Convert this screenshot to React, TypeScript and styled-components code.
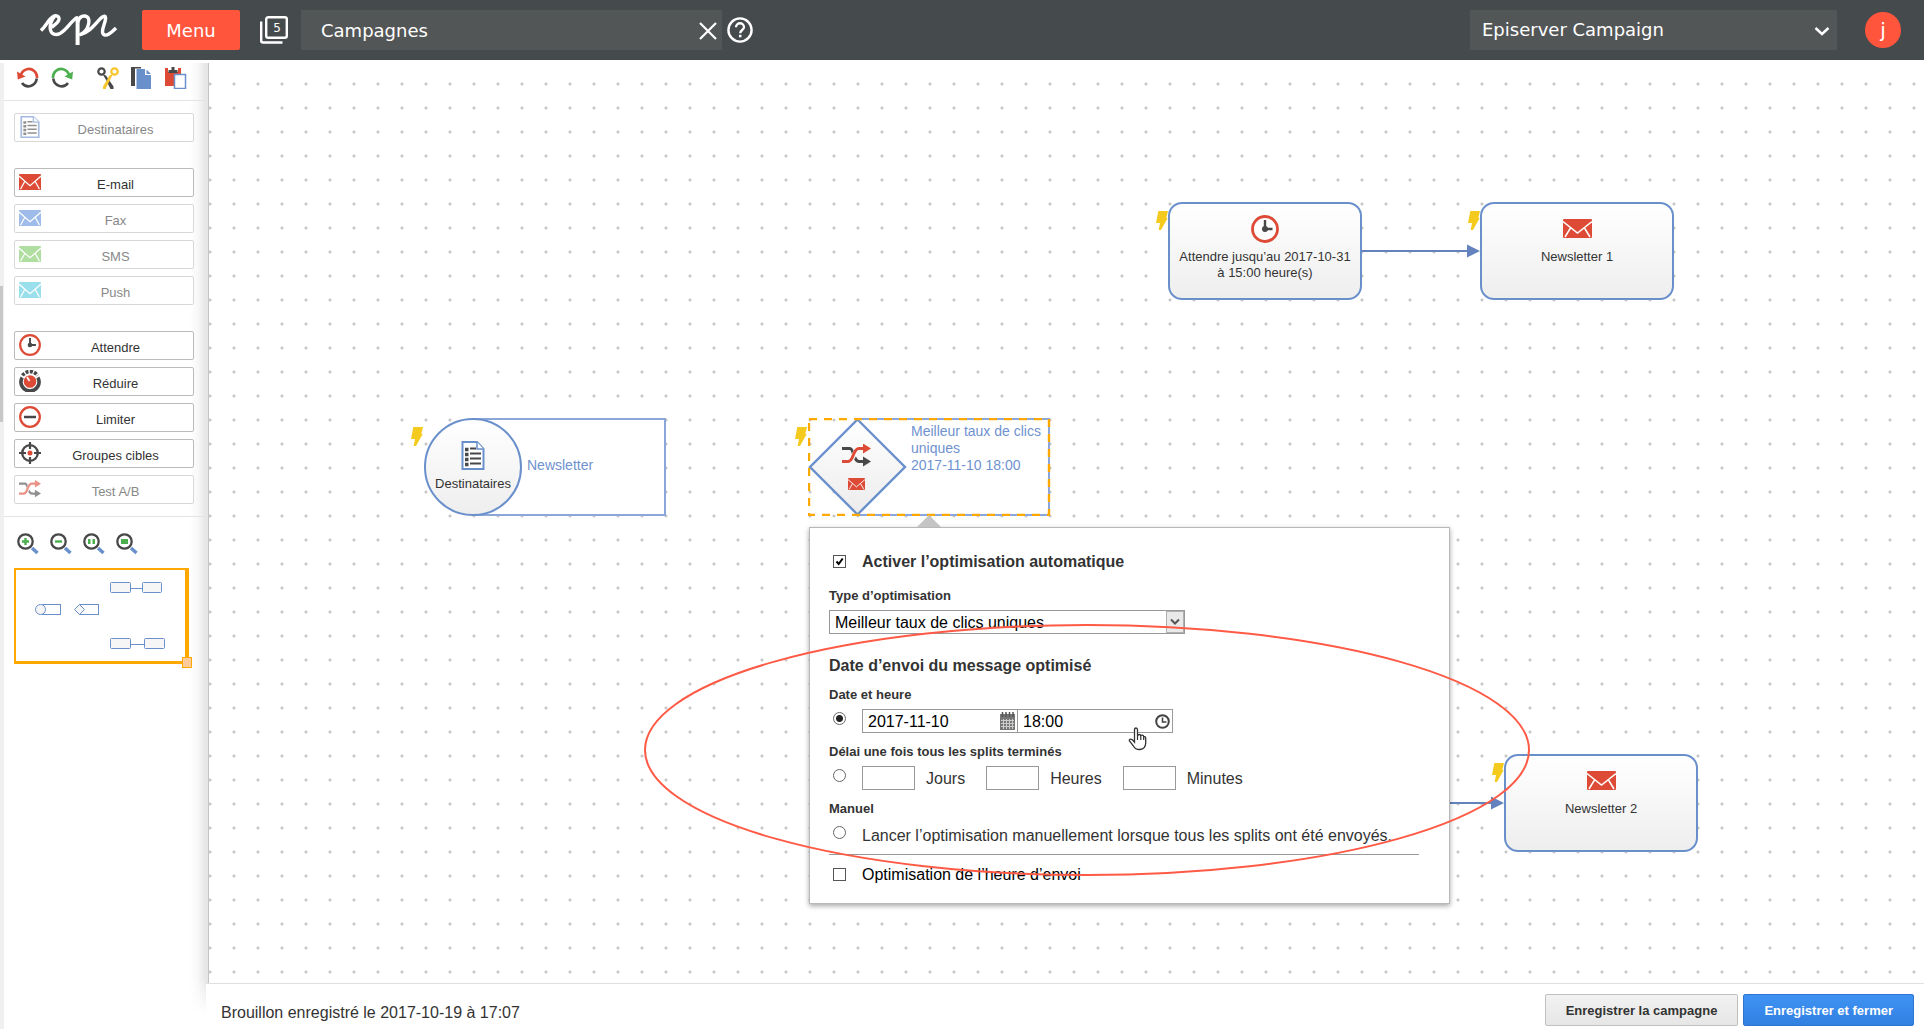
import React from "react";
import styled, { createGlobalStyle, css } from "styled-components";

const RED = "#dd4b36";
const DARK = "#484848";
const BLUE = "#6a90cc";
const GREEN = "#4cb04f";
const ORANGE = "#ffa800";
const CORAL = "#ff553d";

const GlobalStyle = createGlobalStyle`
  *, *::before, *::after { box-sizing: border-box; }
  body {
    margin: 0;
    background: #fff;
    color: #333;
    font-family: "Liberation Sans", Arial, sans-serif;
    font-size: 13px;
    line-height: 16px;
  }
  button, input, select { font: inherit; color: inherit; margin: 0; }
  button { cursor: pointer; }
  svg { display: block; }
`;

/* ---------- page frame ---------- */

const Page = styled.div`
  display: flex;
  flex-direction: column;
  min-height: 100vh;
`;

const Header = styled.header`
  display: flex;
  align-items: center;
  height: 60px;
  padding: 0 23px 0 40px;
  background: #454a4c;
  color: #fff;
  font-family: "DejaVu Sans", Verdana, sans-serif;
  font-size: 18px;
  line-height: 40px;
`;

const MenuButton = styled.button`
  width: 98px;
  height: 40px;
  margin-left: 25px;
  padding: 1px 0 0;
  border: 0;
  border-radius: 2px;
  background: ${CORAL};
`;

const IconButton = styled.button`
  display: flex;
  padding: 0;
  border: 0;
  background: none;
`;

const TabsButton = styled(IconButton)`
  margin: 0 13px 0 20px;
`;

const Tab = styled.div`
  display: flex;
  align-items: center;
  justify-content: space-between;
  flex: 0 1 421px;
  height: 40px;
  padding: 1px 4px 0 20px;
  margin-right: 5px;
  background: #535657;
`;

const ProductPicker = styled.div`
  display: grid;
  align-items: center;
  flex: 0 1 367px;
  height: 40px;
  margin-left: auto;
  background: #535657;

  select, svg { grid-area: 1 / 1; }
  svg { justify-self: end; margin-right: 7px; pointer-events: none; }
`;

const ProductSelect = styled.select`
  appearance: none;
  width: 100%;
  height: 40px;
  padding: 0 30px 0 12px;
  border: 0;
  background: transparent;
`;

const Avatar = styled.button`
  width: 36px;
  height: 36px;
  margin-left: 28px;
  padding: 0;
  border: 0;
  border-radius: 50%;
  background: ${CORAL};
  font-size: 20px;
  line-height: 36px;
`;

const Body = styled.div`
  display: flex;
  flex: 1;
  padding-top: 3px;
`;

const ScrollTrack = styled.div`
  flex: 0 0 4px;
  padding-top: 223px;
  background: #f0f0f0;
`;

const ScrollThumb = styled.div`
  width: 3px;
  height: 136px;
  background: #c8c8c8;
`;

const Sidebar = styled.aside`
  flex: 0 0 202px;
  background:
    linear-gradient(to bottom, rgba(255, 255, 255, 0), #fff 36px) left bottom / 100% 52px no-repeat,
    linear-gradient(to right, rgba(0, 0, 0, 0), rgba(0, 0, 0, 0.03) 8px, rgba(0, 0, 0, 0.1)) right top / 16px 100% no-repeat;
`;

const Main = styled.main`
  display: flex;
  flex-direction: column;
  flex: 1;
  min-width: 0;
`;

/* ---------- sidebar ---------- */

const Toolbar = styled.div<{ $gap: number; $top: number }>`
  display: flex;
  gap: ${(p) => p.$gap}px;
  padding: ${(p) => p.$top}px 0 0 13px;
`;

const EditToolbar = styled(Toolbar)`
  height: 38px;
  border-bottom: 1px solid #e4e4e4;
`;

const ToolGroup = styled.div`
  display: flex;
  gap: 12px;
  margin-left: 12px;
`;

const Palette = styled.div`
  display: flex;
  flex-direction: column;
  gap: 26px;
  padding: 12px 12px 12px 10px;
  border-bottom: 1px solid #e4e4e4;
`;

const PaletteGroup = styled.div`
  display: flex;
  flex-direction: column;
  gap: 7px;
`;

const PaletteButton = styled.button`
  display: flex;
  height: 29px;
  padding: 0 14px 0 4px;
  border: 1px solid #bbb;
  border-radius: 2px;
  background: #fff;
  line-height: 30px;

  &:disabled {
    border-color: #d8d8d8;
    color: #888;
    cursor: default;
  }
  &:disabled svg { opacity: 0.6; }
`;

const PaletteIcon = styled.span`
  display: flex;
  align-items: center;
  justify-content: center;
  flex: 0 0 22px;
  height: 26px;
`;

const PaletteText = styled.span`
  flex: 1;
  padding: 1px 0 0 11px;
  text-align: center;
`;

const MiniMap = styled.div`
  position: relative;
  width: 175px;
  height: 96px;
  margin: 13px 0 0 10px;
  border: solid ${ORANGE};
  border-width: 2px 4px 3px 2px;
`;

const MiniHandle = styled.div`
  position: absolute;
  right: -7px;
  bottom: -7px;
  width: 10px;
  height: 11px;
  border: 1px solid ${ORANGE};
  background: #ffcc99;
`;

/* ---------- canvas ---------- */

const Canvas = styled.section`
  position: relative;
  flex: 1;
  margin-left: 2px;
  border-left: 1px solid #c4c4c4;
  background: radial-gradient(circle at 12px 12px, #c8c8c8 1px, rgba(200, 200, 200, 0) 2px) 13px 9px / 24px 24px;
  box-shadow: -2px 0 0 #e6e6e6;
  overflow: hidden;
`;

const CanvasLayer = styled.svg`
  position: absolute;
  left: 0;
  top: 0;
  pointer-events: none;
`;

const placed = css<{ $x: number; $y: number }>`
  position: absolute;
  left: ${(p) => p.$x}px;
  top: ${(p) => p.$y}px;
`;

const Node = styled.div<{ $x: number; $y: number; $w?: number; $round?: boolean }>`
  ${placed}
  display: flex;
  flex-direction: column;
  align-items: center;
  gap: 6px;
  width: ${(p) => p.$w ?? 194}px;
  height: 98px;
  padding: ${(p) => (p.$round ? "21px 0 0" : "10px 7px 0")};
  border: 2px solid ${BLUE};
  border-radius: ${(p) => (p.$round ? "50%" : "14px")};
  background: linear-gradient(#fff, #eee);
  text-align: center;
`;

const IconSlot = styled.div`
  display: flex;
  align-items: center;
  height: 29px;
`;

const BoltMark = styled.div<{ $x: number; $y: number }>`
  ${placed}
`;

const Caption = styled.div<{ $x: number; $y: number; $w: number; $pad: string }>`
  ${placed}
  width: ${(p) => p.$w}px;
  height: 98px;
  padding: ${(p) => p.$pad};
  border: 2px solid #8ba7d9;
  border-left: 0;
  background: #fff;
  color: #6f92cf;
  font-size: 14px;
  line-height: 17px;
`;

const SplitShape = styled.div<{ $x: number; $y: number }>`
  ${placed}
`;

/* ---------- popover ---------- */

const Popover = styled.form<{ $x: number; $y: number }>`
  ${placed}
  width: 641px;
  padding: 24px 30px 18px 19px;
  border: 1px solid #b8b8b8;
  background: #fff;
  box-shadow: 0 2px 5px rgba(0, 0, 0, 0.35);
  font-size: 16px;
  line-height: 20px;

  &::before {
    content: "";
    position: absolute;
    left: 107px;
    top: -13px;
    border: solid transparent;
    border-width: 0 12px 12px;
    border-bottom-color: #c4c4c4;
  }
`;

const ChoiceRow = styled.div`
  display: flex;
  align-items: flex-start;
  gap: 16px;
  padding-left: 4px;
`;

const FieldLabel = styled.label`
  display: block;
  margin: 11px 0 6px;
  font-size: 13px;
  font-weight: bold;
  line-height: 16px;
`;

const TypeLabel = styled(FieldLabel)`
  margin-top: 16px;
`;

const StrongLabel = styled.label`
  font-weight: bold;
`;

const SectionTitle = styled.h2`
  margin: 22px 0 0;
  font-size: 16px;
  line-height: 20px;
`;

const Check = styled.input`
  appearance: none;
  flex: none;
  width: 13px;
  height: 13px;
  margin-top: 3px;
  border: 1px solid #555;
  background: #fff;

  &:checked {
    background: #fff
      url("data:image/svg+xml,%3Csvg xmlns='http://www.w3.org/2000/svg' width='11' height='11'%3E%3Cpath d='M2.500 5.500l2.200 2.500 4-5.500' fill='none' stroke='%23000' stroke-width='2'/%3E%3C/svg%3E")
      center no-repeat;
  }
`;

const Radio = styled.input`
  appearance: none;
  flex: none;
  width: 13px;
  height: 13px;
  margin-top: 3px;
  border: 1px solid #666;
  border-radius: 50%;
  background: #fff;

  &:checked { background: radial-gradient(circle, #222 3px, #fff 4px); }
`;

const SelectBox = styled.div`
  display: grid;
  grid-template-columns: 1fr 18px;
  width: 356px;
  border: 1px solid #999;
`;

const TypeSelect = styled.select`
  appearance: none;
  grid-area: 1 / 1 / 2 / 3;
  height: 22px;
  padding: 1px 22px 0 5px;
  border: 0;
  background: transparent;
  color: #000;
  line-height: 22px;
`;

const SelectArrow = styled.span`
  grid-area: 1 / 2;
  display: flex;
  align-items: center;
  justify-content: center;
  border: 1px solid #b0b0b0;
  background: #e9e9e9;
  pointer-events: none;
`;

const FieldPair = styled.div`
  display: flex;
`;

const IconField = styled.div`
  display: flex;
  align-items: center;
  width: 156px;
  height: 24px;
  padding: 0 2px 0 5px;
  border: 1px solid #999;

  & + & { margin-left: -1px; }
  input {
    flex: 1;
    min-width: 0;
    padding: 1px 0 0;
    border: 0;
    outline: 0;
    background: none;
    color: #000;
  }
`;

const Delay = styled.label`
  display: flex;
  gap: 11px;
  height: 24px;
  margin-right: 5px;
  line-height: 26px;

  input {
    width: 53px;
    height: 24px;
    border: 1px solid #999;
    background: #fff;
  }
`;

const ManualLabel = styled.label`
  height: 24px;
  line-height: 26px;
`;

const Rule = styled.hr`
  margin: 7px 0 10px;
  border: 0;
  border-top: 1px solid #999;
`;

const PlainLabel = styled.label`
  color: #000;
`;

/* ---------- footer ---------- */

const Footer = styled.footer`
  display: flex;
  gap: 5px;
  height: 46px;
  padding: 10px 10px 3px 15px;
  border-top: 1px solid #e0e0e0;
  background: #fff;
`;

const DraftNote = styled.span`
  margin-right: auto;
  padding-top: 1px;
  font-size: 16px;
  line-height: 36px;
`;

const FooterButton = styled.button<{ $primary?: boolean }>`
  height: 32px;
  padding: 1px 20px 0;
  border: 1px solid ${(p) => (p.$primary ? "#2f74cf" : "#c0c0c0")};
  border-radius: 2px;
  background: ${(p) => (p.$primary ? "linear-gradient(#3f92f3, #3080e2)" : "linear-gradient(#f2f2f2, #e6e6e6)")};
  color: ${(p) => (p.$primary ? "#fff" : "#333")};
  font-weight: bold;
`;

/* ---------- icons ---------- */

const Logo = () => (
  <svg width="77" height="32" viewBox="0 0 77 32" fill="none" stroke="#fff" strokeWidth="3.4" strokeLinejoin="round" role="img" aria-label="epi">
    <path d="M1 16.500C6 12 8 6 13 2.800C16 .8 19.500 2 19 5.200C18.500 9 14 11 11.500 13.500M14.500 2.500C11 6 9.500 12 10.500 16C11.500 20.500 16 21.500 20 19.500C25.500 17 30 9 35.500 4.500C37.400 3 37.600 4 37.600 7" />
    <path d="M37.600 5V31" strokeWidth="4" />
    <path d="M37.800 8C39 3.500 42 1.700 45 2C48.500 2.500 49.500 6 48.500 10C47.500 15 44.500 18.500 40.500 20.500C49 19 55 10 60.500 4.500C64 1 66 1.800 65.500 5C65 9.500 62.500 13.500 62.500 17.500C62.500 21 65.500 22 68.500 20.300C71.500 18.600 73.500 16.500 76 14" />
  </svg>
);

const TabsIcon = () => (
  <svg width="28" height="28" viewBox="0 0 28 28" fill="none" stroke="#fff" strokeWidth="2.400">
    <rect x="6.200" y="1.200" width="20.600" height="20.600" rx="2" />
    <path d="M1.200 5.500V24.500Q1.200 26.500 3.200 26.500H22.500" />
    <text x="17" y="15.500" fill="#fff" stroke="none" fontSize="12" textAnchor="middle" fontFamily="DejaVu Sans, sans-serif">5</text>
  </svg>
);

const CloseIcon = () => (
  <svg width="20" height="20" viewBox="0 0 20 20" stroke="#fff" strokeWidth="2.200">
    <path d="M2 2L18 18M18 2L2 18" />
  </svg>
);

const HelpIcon = () => (
  <svg width="26" height="26" viewBox="0 0 26 26" fill="none" stroke="#fff">
    <circle cx="13" cy="13" r="11.600" strokeWidth="2.400" />
    <path d="M9 10.300C9 4.800 17 5 17 10.200C17 13 13.200 13 13.200 16.200" strokeWidth="2.300" />
    <path d="M13.200 17.800V20.300" strokeWidth="2.500" />
  </svg>
);

const ChevronIcon = () => (
  <svg width="16" height="12" viewBox="0 0 16 12" fill="none" stroke="#fff" strokeWidth="2.400">
    <path d="M1.500 4L8 10L14.500 4" />
  </svg>
);

const UndoIcon = ({ redo }: { redo?: boolean }) => (
  <svg width="22" height="22" viewBox="0 0 22 22" fill="none" strokeWidth="2.600">
    <g transform={redo ? "translate(22 0) scale(-1 1)" : undefined}>
      <path d="M3.800 8C6 1.500 13 .3 17.200 4C19.500 6 20.200 8.500 20 11" stroke={redo ? GREEN : RED} />
      <path d="M19.800 11.500C18.500 19.500 9.500 22 5 16" stroke={DARK} />
      <path d="M0 4.500L8.500 9.500L.8 12.500Z" fill={redo ? GREEN : RED} />
    </g>
  </svg>
);

const CutIcon = () => (
  <svg width="22" height="22" viewBox="0 0 22 22" fill="none" strokeWidth="2.200">
    <path d="M5.500 7L9 8.500L16.500 19.500V22H13.500L8.500 12Z" fill={DARK} />
    <path d="M16 7L12.500 8.500L6 19.500V22H8.500L13.500 12Z" fill="#f7c52c" />
    <circle cx="4.500" cy="4.500" r="3.200" stroke={DARK} />
    <circle cx="17.500" cy="4.500" r="3.200" stroke="#f7c52c" />
  </svg>
);

const CopyIcon = () => (
  <svg width="22" height="22" viewBox="0 0 22 22">
    <path d="M0 0H10V1.500H4V19H0Z" fill={DARK} />
    <path d="M5.500 2H14V8H20V22H5.500Z" fill={BLUE} />
    <path d="M15.500 2.500L20 7H15.500Z" fill={BLUE} />
  </svg>
);

const PasteIcon = () => (
  <svg width="22" height="22" viewBox="0 0 22 22">
    <path d="M0 1H16V19H0Z" fill={RED} />
    <path d="M3 1H13V5H3Z" fill="#fff" />
    <path d="M6.500 0H9.500V3H12.500V6H3.500V3H6.500Z" fill={DARK} />
    <rect x="9.500" y="7.500" width="11" height="14" fill="#fff" stroke={BLUE} strokeWidth="1.500" />
  </svg>
);

const ListIcon = ({ w = 20, h = 22 }: { w?: number; h?: number }) => (
  <svg width={w} height={h} viewBox="0 0 24 29" preserveAspectRatio="none">
    <path d="M1.500 1H16L22.500 8V28H1.500Z" fill="#fff" stroke={BLUE} strokeWidth="2" />
    <path d="M16 1V8H22.500" fill="#fff" stroke={BLUE} strokeWidth="1.500" />
    <path d="M4 8.500H7.500M4 13.500H7.500M4 18.500H7.500M4 23.500H7.500" stroke={DARK} strokeWidth="3.400" />
    <path d="M9 7.500H15M9 12.500H20M9 17.500H20M9 22.500H20" stroke={DARK} strokeWidth="2" />
  </svg>
);

const MailIcon = ({ color = RED, w = 22, h = 16 }: { color?: string; w?: number; h?: number }) => (
  <svg width={w} height={h} viewBox="0 0 29 19" preserveAspectRatio="none">
    <rect width="29" height="19" rx="1" fill={color} />
    <path d="M0 2.500L14.500 14L29 2.500M2 18L7.500 9M27 18L21.500 9" fill="none" stroke="#fff" strokeWidth="1.500" />
  </svg>
);

const ClockIcon = ({ size = 22 }: { size?: number }) => (
  <svg width={size} height={size} viewBox="0 0 28 28" fill="none">
    <circle cx="14" cy="14" r="12.500" fill="#fff" stroke={RED} strokeWidth="2.800" />
    <path d="M14 5V14H21.500" stroke={DARK} strokeWidth="2.400" />
    <circle cx="14" cy="14" r="3" fill={DARK} />
  </svg>
);

const DialIcon = () => (
  <svg width="22" height="22" viewBox="0 0 22 22" fill="none">
    <path d="M3.200 7.500A9 9 0 1 0 18.800 7.500" stroke={DARK} strokeWidth="3.600" />
    <path d="M3.500 5.500A9 9 0 0 1 18.500 5.500" stroke={DARK} strokeWidth="3.600" strokeDasharray="3 1.300" />
    <circle cx="11" cy="11.500" r="6.300" fill={RED} />
    <path d="M8 7L10.500 11" stroke="#fff" strokeWidth="1.800" />
  </svg>
);

const LimitIcon = () => (
  <svg width="22" height="22" viewBox="0 0 22 22" fill="none">
    <circle cx="11" cy="11" r="9.800" stroke={RED} strokeWidth="2.300" />
    <path d="M5 11H17" stroke={DARK} strokeWidth="2.500" />
  </svg>
);

const TargetIcon = () => (
  <svg width="22" height="22" viewBox="0 0 22 22" fill="none" stroke={DARK}>
    <circle cx="11" cy="11" r="7.800" strokeWidth="2.300" />
    <path d="M11 0V7M11 15V22M0 11H7M15 11H22" strokeWidth="2.200" />
    <circle cx="11" cy="11" r="2.500" fill={RED} stroke="none" />
  </svg>
);

const ShuffleIcon = ({ w = 22, h = 18 }: { w?: number; h?: number }) => (
  <svg width={w} height={h} viewBox="0 0 29 23" fill="none" strokeWidth="3">
    <path d="M0 4.500H8C12 4.500 11 17.500 17 17.500H22" stroke={DARK} />
    <path d="M21 12.500L29 17.500L21 22.500Z" fill={DARK} />
    <path d="M8 17.500L15.500 5" stroke="#fff" strokeWidth="5" />
    <path d="M0 17.500H6C12 17.500 10.500 4.500 17 4.500H22" stroke={RED} />
    <path d="M21 -.5L29 4.500L21 9.500Z" fill={RED} />
  </svg>
);

const ZoomIcon = ({ mark }: { mark: string }) => (
  <svg width="22" height="22" viewBox="0 0 22 22" fill="none">
    <path d="M15 15L20.500 20" stroke={BLUE} strokeWidth="3.500" />
    <circle cx="8.500" cy="8.500" r="7.200" fill="#fff" stroke={DARK} strokeWidth="2.300" />
    <path d={mark} fill={GREEN} />
  </svg>
);

const BoltIcon = () => (
  <svg width="13" height="19" viewBox="0 0 13 19">
    <path d="M2.300 0H12L10.300 7H11.700L5 19H2.700L4 12H0Z" fill="#f5ca1e" />
  </svg>
);

const CalendarIcon = () => (
  <svg width="15" height="18" viewBox="0 0 15 18">
    <rect y="2" width="15" height="16" fill="#777" />
    <path d="M2.500 0V5M6 0V5M9.500 0V5M13 0V5" stroke="#555" strokeWidth="1.500" />
    <path d="M1 8.500H14M1 11.500H14M1 14.500H14M3.500 7V17M6.500 7V17M9.500 7V17M12.500 7V17" stroke="#ccc" />
  </svg>
);

const TimeIcon = () => (
  <svg width="15" height="15" viewBox="0 0 15 15" fill="none" stroke="#444">
    <circle cx="7.500" cy="7.500" r="6.300" strokeWidth="2" />
    <path d="M7.500 3.500V8H11.500" strokeWidth="1.600" />
  </svg>
);

/* ---------- data ---------- */

const palette = [
  [{ label: "Destinataires", icon: <ListIcon />, off: true }],
  [
    { label: "E-mail", icon: <MailIcon />, off: false },
    { label: "Fax", icon: <MailIcon color="#5f8fdc" />, off: true },
    { label: "SMS", icon: <MailIcon color="#7cc862" />, off: true },
    { label: "Push", icon: <MailIcon color="#56cbe0" />, off: true },
  ],
  [
    { label: "Attendre", icon: <ClockIcon />, off: false },
    { label: "Réduire", icon: <DialIcon />, off: false },
    { label: "Limiter", icon: <LimitIcon />, off: false },
    { label: "Groupes cibles", icon: <TargetIcon />, off: false },
    { label: "Test A/B", icon: <ShuffleIcon />, off: true },
  ],
];

const bolts = [
  [202, 364],
  [586, 364],
  [947, 148],
  [1259, 148],
  [1283, 700],
];

const zooms = [
  { name: "Agrandir", mark: "M7.300 5H9.700V7.300H12V9.700H9.700V12H7.300V9.700H5V7.300H7.300Z" },
  { name: "Réduire l’affichage", mark: "M5 7.300H12V9.700H5Z" },
  { name: "Taille réelle", mark: "M5 6H7.500V11H5ZM9.500 6H12V11H9.500Z" },
  { name: "Ajuster", mark: "M5 6H12V11H5Z" },
];

export default function App() {
  return (
    <Page>
      <GlobalStyle />
      <Header>
        <Logo />
        <MenuButton type="button">Menu</MenuButton>
        <TabsButton type="button" aria-label="Onglets"><TabsIcon /></TabsButton>
        <Tab>
          <span>Campagnes</span>
          <IconButton type="button" aria-label="Fermer"><CloseIcon /></IconButton>
        </Tab>
        <IconButton type="button" aria-label="Aide"><HelpIcon /></IconButton>
        <ProductPicker>
          <ProductSelect aria-label="Produit">
            <option>Episerver Campaign</option>
          </ProductSelect>
          <ChevronIcon />
        </ProductPicker>
        <Avatar type="button">j</Avatar>
      </Header>

      <Body>
        <ScrollTrack><ScrollThumb /></ScrollTrack>
        <Sidebar>
          <EditToolbar $gap={12} $top={4}>
            <IconButton type="button" aria-label="Annuler"><UndoIcon /></IconButton>
            <IconButton type="button" aria-label="Rétablir"><UndoIcon redo /></IconButton>
            <ToolGroup>
              <IconButton type="button" aria-label="Couper"><CutIcon /></IconButton>
              <IconButton type="button" aria-label="Copier"><CopyIcon /></IconButton>
              <IconButton type="button" aria-label="Coller"><PasteIcon /></IconButton>
            </ToolGroup>
          </EditToolbar>
          <Palette>
            {palette.map((group) => (
              <PaletteGroup key={group[0].label}>
                {group.map((item) => (
                  <PaletteButton type="button" key={item.label} disabled={item.off}>
                    <PaletteIcon>{item.icon}</PaletteIcon>
                    <PaletteText>{item.label}</PaletteText>
                  </PaletteButton>
                ))}
              </PaletteGroup>
            ))}
          </Palette>
          <Toolbar $gap={11} $top={16}>
            {zooms.map((z) => (
              <IconButton type="button" key={z.name} aria-label={z.name}><ZoomIcon mark={z.mark} /></IconButton>
            ))}
          </Toolbar>
          <MiniMap>
            <svg width="169" height="91" viewBox="0 0 169 91" fill="#f6f6f6" stroke={BLUE}>
              <path d="M114 18.500H128M114 74.500H130" />
              <rect x="94.500" y="12.500" width="20" height="10" rx="1" />
              <rect x="126.500" y="12.500" width="19" height="10" rx="1" />
              <rect x="26.500" y="34.500" width="18" height="10" fill="#fff" />
              <circle cx="24.500" cy="39.500" r="5" />
              <rect x="63.500" y="34.500" width="19" height="10" fill="#fff" />
              <path d="M63.500 34.500L68.500 39.500L63.500 44.500L58.500 39.500Z" />
              <rect x="94.500" y="68.500" width="20" height="10" rx="1" />
              <rect x="128.500" y="68.500" width="20" height="10" rx="1" />
            </svg>
            <MiniHandle />
          </MiniMap>
        </Sidebar>

        <Main>
          <Canvas>
            <CanvasLayer width="1600" height="900">
              <g stroke="#6482bd" strokeWidth="2">
                <path d="M1153 188H1262M1153 740H1286" />
              </g>
              <path d="M1258 181.500L1271 188L1258 194.500ZM1282 733.500L1295 740L1282 746.500Z" fill="#6482bd" />
            </CanvasLayer>

            {bolts.map(([x, y]) => (
              <BoltMark key={`${x}-${y}`} $x={x} $y={y}><BoltIcon /></BoltMark>
            ))}

            <Node $x={959} $y={139}>
              <IconSlot><ClockIcon size={28} /></IconSlot>
              <span>Attendre jusqu’au 2017-10-31 à 15:00 heure(s)</span>
            </Node>
            <Node $x={1271} $y={139}>
              <IconSlot><MailIcon w={29} h={19} /></IconSlot>
              <span>Newsletter 1</span>
            </Node>
            <Node $x={1295} $y={691}>
              <IconSlot><MailIcon w={29} h={19} /></IconSlot>
              <span>Newsletter 2</span>
            </Node>

            <Caption $x={264} $y={355} $w={193} $pad="37px 0 0 54px">Newsletter</Caption>
            <Node $x={215} $y={355} $w={98} $round>
              <IconSlot><ListIcon w={24} h={29} /></IconSlot>
              <span>Destinataires</span>
            </Node>

            <Caption $x={648} $y={355} $w={193} $pad="3px 0 0 54px">
              Meilleur taux de clics uniques
              <br />
              2017-11-10 18:00
            </Caption>
            <SplitShape $x={599} $y={355}>
              <svg width="243" height="98" viewBox="0 0 243 98">
                <defs>
                  <linearGradient id="split" x1="0" y1="0" x2="0" y2="1">
                    <stop offset="0" stopColor="#fff" />
                    <stop offset="1" stopColor="#ececec" />
                  </linearGradient>
                </defs>
                <path d="M49.500 1.500L97 49L49.500 96.500L2 49Z" fill="url(#split)" stroke={BLUE} strokeWidth="2.400" />
                <rect x="1" y="1" width="240" height="96" fill="none" stroke={ORANGE} strokeWidth="2.400" strokeDasharray="8 7" />
                <g transform="translate(34 26)"><ShuffleIcon w={29} h={23} /></g>
                <g transform="translate(40 60)"><MailIcon w={17} h={12} /></g>
              </svg>
            </SplitShape>

            <Popover $x={600} $y={464}>
              <ChoiceRow>
                <Check type="checkbox" id="auto" defaultChecked />
                <StrongLabel htmlFor="auto">Activer l’optimisation automatique</StrongLabel>
              </ChoiceRow>
              <TypeLabel htmlFor="type">Type d’optimisation</TypeLabel>
              <SelectBox>
                <TypeSelect id="type">
                  <option>Meilleur taux de clics uniques</option>
                </TypeSelect>
                <SelectArrow>
                  <svg width="10" height="8" viewBox="0 0 10 8" fill="none" stroke="#555" strokeWidth="2"><path d="M1 1.500L5 5.500L9 1.500" /></svg>
                </SelectArrow>
              </SelectBox>
              <SectionTitle>Date d’envoi du message optimisé</SectionTitle>
              <FieldLabel htmlFor="when-date">Date et heure</FieldLabel>
              <ChoiceRow>
                <Radio type="radio" name="when" id="when-date" defaultChecked />
                <FieldPair>
                  <IconField>
                    <input aria-label="Date" defaultValue="2017-11-10" />
                    <CalendarIcon />
                  </IconField>
                  <IconField>
                    <input aria-label="Heure" defaultValue="18:00" />
                    <TimeIcon />
                  </IconField>
                </FieldPair>
              </ChoiceRow>
              <FieldLabel htmlFor="when-delay">Délai une fois tous les splits terminés</FieldLabel>
              <ChoiceRow>
                <Radio type="radio" name="when" id="when-delay" />
                <Delay><input />Jours</Delay>
                <Delay><input />Heures</Delay>
                <Delay><input />Minutes</Delay>
              </ChoiceRow>
              <FieldLabel htmlFor="when-manual">Manuel</FieldLabel>
              <ChoiceRow>
                <Radio type="radio" name="when" id="when-manual" />
                <ManualLabel htmlFor="when-manual">Lancer l’optimisation manuellement lorsque tous les splits ont été envoyés.</ManualLabel>
              </ChoiceRow>
              <Rule />
              <ChoiceRow>
                <Check type="checkbox" id="send-time" />
                <PlainLabel htmlFor="send-time">Optimisation de l’heure d’envoi</PlainLabel>
              </ChoiceRow>
            </Popover>

            <CanvasLayer width="1600" height="900" fill="none">
              <ellipse cx="878" cy="687" rx="442" ry="125" stroke="#ff5a45" strokeWidth="2" />
              <g transform="translate(919 664)">
                <path d="M6.500 15V3Q6.500 1 8 1T9.500 3V9Q10 7.500 11.300 7.500T12.800 9Q13.500 8 14.600 8.200T15.700 9.800Q17.500 9 17.700 11V16Q17.500 22 12 22.500Q7.500 22.800 5.500 19L1.500 14Q.8 12.500 2.500 12.200Q4.200 12 6.500 15Z" fill="#fff" stroke="#333" strokeWidth="1.300" />
                <path d="M9.500 9V13M12.800 9.500V13M15.700 10V13" stroke="#333" strokeWidth="1.200" />
              </g>
            </CanvasLayer>
          </Canvas>

          <Footer>
            <DraftNote>Brouillon enregistré le 2017-10-19 à 17:07</DraftNote>
            <FooterButton type="button">Enregistrer la campagne</FooterButton>
            <FooterButton type="submit" $primary>Enregistrer et fermer</FooterButton>
          </Footer>
        </Main>
      </Body>
    </Page>
  );
}
